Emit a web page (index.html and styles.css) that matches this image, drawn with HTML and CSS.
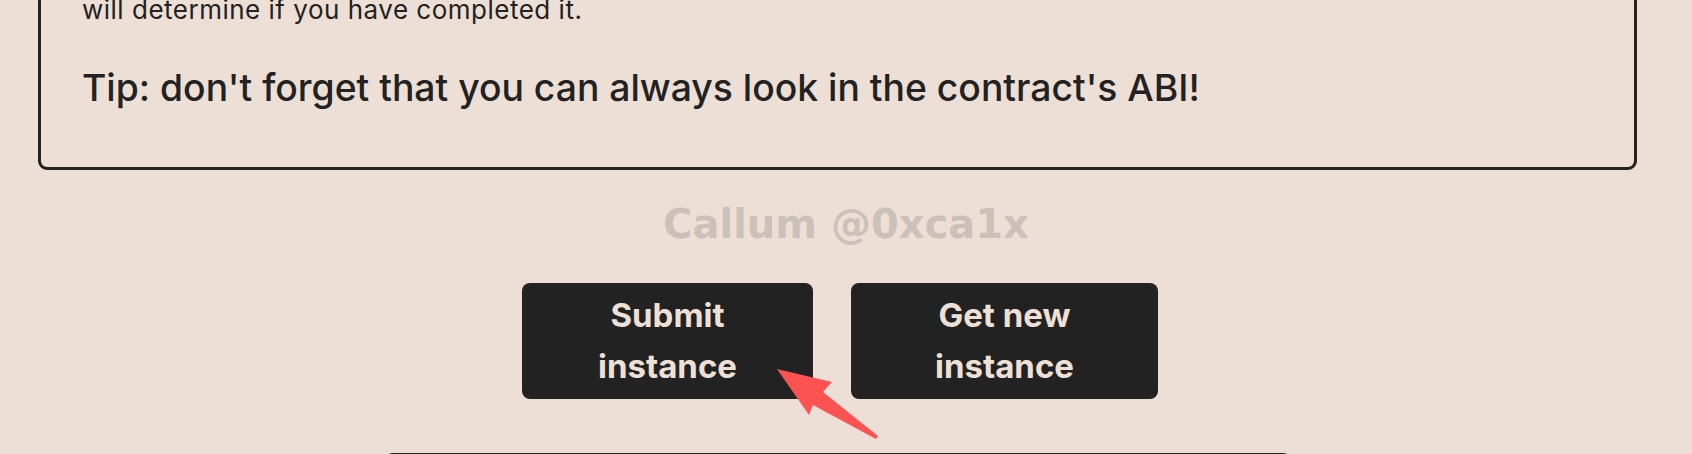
FILE: index.html
```html
<!DOCTYPE html>
<html lang="en">
<head>
  <meta charset="UTF-8">
  <meta name="viewport" content="width=device-width, initial-scale=1.0">
  <title>Level description</title>
  <link rel="stylesheet" href="styles.css">
</head>
<body>
  <div class="page">
    <div class="column">
      <div class="description">
        <p>will determine if you have completed it.</p>
        <h3>Tip: don't forget that you can always look in the contract's ABI!</h3>
      </div>
    </div>

    <h2 class="author">Callum @0xca1x</h2>

    <div class="actions">
      <button class="button submit">Submit instance</button>
      <button class="button new">Get new instance</button>
    </div>

    <div class="column">
      <div class="console"></div>
    </div>

    <!-- annotation arrow pointing at the submit button -->
    <svg class="arrow" width="1692" height="454" viewBox="0 0 1692 454">
      <polygon points="777,369 832,382 823,392 878,436 876,439 813,405 809,415" fill="#fd5252"/>
    </svg>
  </div>
</body>
</html>
```

FILE: styles.css
```css
html, body {
  margin: 0;
  padding: 0;
  overflow: hidden;
}
body {
  background-color: #eddfd6;
  font-family: Inter, "Noto Sans", sans-serif;
  color: #222222;
  height: 454px;
}
.page {
  position: relative;
  height: 454px;
  overflow: hidden;
}
.column {
  margin-left: 38px;
  width: 1599px;
}
.description {
  margin-top: -40px;
  border: 3px solid #222222;
  border-radius: 9px;
  padding: 30px 42px 58px 41px;
}
.description p {
  margin: 0;
  font-size: 26px;
  letter-spacing: 0.5px;
  line-height: 34px;
}
.description h3 {
  margin: 39px 0 0;
  font-size: 37.3px;
  font-weight: 500;
  line-height: 43px;
}
.author {
  margin: 30px 0 0;
  text-align: center;
  font-family: "DejaVu Sans", sans-serif;
  font-weight: 700;
  font-size: 40px;
  line-height: 48px;
  color: #ccc1b8;
}
.actions {
  display: flex;
  justify-content: center;
  gap: 38px;
  margin-top: 35px;
  padding-right: 12px;
}
.button {
  display: flex;
  align-items: center;
  justify-content: center;
  height: 116px;
  padding: 0;
  border: none;
  border-radius: 8px;
  background-color: #222222;
  color: #eee0d7;
  font-family: Inter, "Noto Sans", sans-serif;
  font-weight: 700;
  font-size: 33px;
  line-height: 51px;
  text-align: center;
}
.button.submit {
  width: 291px;
  padding: 0 70px;
}
.button.new {
  width: 307px;
  padding: 0 70px;
}
.console {
  width: 902px;
  height: 80px;
  margin: 54px auto 0;
  border: 3px solid #222222;
  border-radius: 9px;
}
.arrow {
  position: absolute;
  top: 0;
  left: 0;
  pointer-events: none;
}
```
